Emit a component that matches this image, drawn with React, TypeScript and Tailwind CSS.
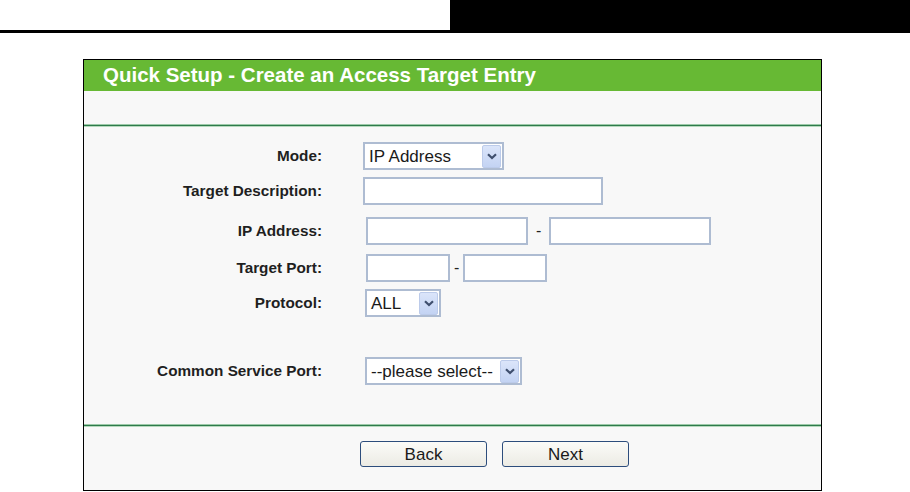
import type { ReactNode } from "react";

// Quick Setup form - Access Target Entry
const FONT = { fontFamily: '"Liberation Sans", Arial, sans-serif' };

function Chevron() {
  return (
    <svg width="10" height="7" viewBox="0 0 10 7">
      <path d="M1 1.2 L5 5 L9 1.2" fill="none" stroke="#3f4f6e" strokeWidth="2.2" />
    </svg>
  );
}

function Select({ value, width }: { value: string; width: string }) {
  return (
    <div className={`flex h-[28px] items-center justify-between border-2 border-[#aebcd2] bg-white pl-[4px] pr-[1px] ${width}`}>
      <span className="text-[17px] leading-none text-[#1a1a1a]">{value}</span>
      <span className="flex h-[23px] w-[19px] items-center justify-center rounded-[2px] border border-[#bccbea] bg-gradient-to-b from-[#dbe5fa] to-[#c3d3f3]">
        <Chevron />
      </span>
    </div>
  );
}

function Input({ width }: { width: string }) {
  return <div className={`h-[28px] border-2 border-[#aebcd2] bg-white ${width}`} />;
}

function Dash() {
  return <span className="text-[16px] leading-none text-[#222]">-</span>;
}

function Row({ label, mt, children }: { label: string; mt: string; children: ReactNode }) {
  return (
    <div className={`flex h-[28px] items-center ${mt}`}>
      <div className="w-[238px] pr-[0px] text-right text-[15.3px] font-bold text-[#1f1f1f]">{label}</div>
      <div className="ml-[41px] flex items-center">{children}</div>
    </div>
  );
}

function GreenRule() {
  return (
    <div className="flex flex-col">
      <div className="h-px bg-[#9ccaa8]" />
      <div className="h-px bg-[#2f7a4b]" />
      <div className="h-px bg-[#b5d9bd]" />
    </div>
  );
}

function Button({ label }: { label: string }) {
  return (
    <button className="flex h-[26px] w-[127px] items-center justify-center rounded-[3px] border border-[#2d4d7c] bg-gradient-to-b from-[#fbfbf8] to-[#ecebe4] text-[17px] leading-none text-[#1a1a1a]">
      {label}
    </button>
  );
}

export default function App() {
  return (
    <div className="h-[492px] w-[910px] overflow-hidden bg-white" style={FONT}>
      {/* page top band */}
      <div className="flex h-[33px]">
        <div className="w-[450px] self-end border-b-[3px] border-black" />
        <div className="flex-1 bg-black" />
      </div>

      <div className="ml-[83px] mt-[26px] w-[739px] border border-black bg-[#f8f8f8]">
        <div className="flex h-[31px] items-center bg-[#67b934] pl-[19px]">
          <span className="text-[20.5px] font-bold leading-none text-white">
            Quick Setup - Create an Access Target Entry
          </span>
        </div>
        <div className="h-[33px]" />
        <GreenRule />

        <div className="pb-[39px] pt-[15px]">
          <Row label="Mode:" mt="">
            <Select value="IP Address" width="w-[141px]" />
          </Row>
          <Row label="Target Description:" mt="mt-[7px]">
            <Input width="w-[240px]" />
          </Row>
          <Row label="IP Address:" mt="mt-[12px]">
            <div className="ml-[3px] flex items-center">
              <Input width="w-[162px]" />
              <span className="mx-[8px]"><Dash /></span>
              <Input width="w-[162px]" />
            </div>
          </Row>
          <Row label="Target Port:" mt="mt-[9px]">
            <div className="ml-[3px] flex items-center">
              <Input width="w-[84px]" />
              <span className="mx-[4px]"><Dash /></span>
              <Input width="w-[84px]" />
            </div>
          </Row>
          <Row label="Protocol:" mt="mt-[7px]">
            <div className="ml-[2px]">
              <Select value="ALL" width="w-[76px]" />
            </div>
          </Row>
          <Row label="Common Service Port:" mt="mt-[40px]">
            <div className="ml-[2px]">
              <Select value="--please select--" width="w-[157px]" />
            </div>
          </Row>
        </div>

        <GreenRule />
        <div className="flex h-[63px] gap-[15px] pl-[276px] pt-[14px]">
          <Button label="Back" />
          <Button label="Next" />
        </div>
      </div>
    </div>
  );
}
